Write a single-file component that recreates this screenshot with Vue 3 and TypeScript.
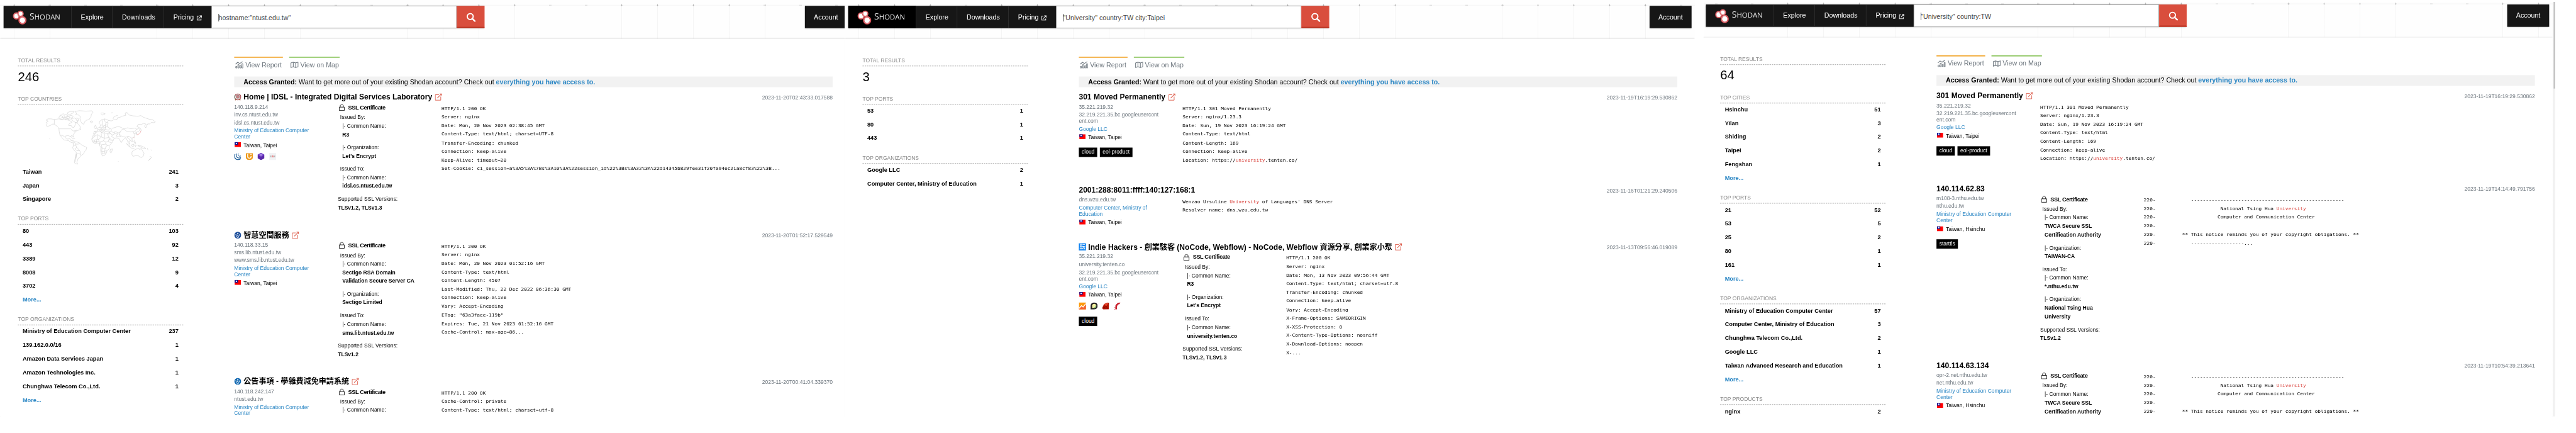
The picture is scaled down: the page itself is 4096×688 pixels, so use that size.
<script setup lang="ts">
interface Cert {
  cn: string[]
  org: string[]
  toCn: string[]
  toOrg?: string[]
  versions: string
  short?: boolean
  clipAfter?: number
}
interface Result {
  icon?: string
  title: string
  link?: boolean
  time: string
  hosts: string[][]
  org: string[]
  place?: string
  tech?: string[]
  tags?: string[]
  cert?: CertLine[]
  banner: string[]
}
interface CertLine {
  text: string
  kind: string
}
interface Facet {
  title: string
  map?: boolean
  rows: [string, string][]
  more?: boolean
}
interface Panel {
  key: string
  query: string
  total: string
  facets: Facet[]
  results: Result[]
}

function certLines(c: Cert): CertLine[] {
  const out: CertLine[] = [{ text: 'Issued By:', kind: 'by' }]
  const block = (label: string, values: string[], gap: boolean) => {
    out.push({ text: '|- ' + label + ':', kind: gap ? 'key gap' : 'key' })
    values.forEach((v) => out.push({ text: v, kind: 'val' }))
  }
  block('Common Name', c.cn, false)
  block('Organization', c.org, true)
  out.push({ text: 'Issued To:', kind: 'by gap' })
  block('Common Name', c.toCn, false)
  if (c.toOrg) block('Organization', c.toOrg, true)
  out.push({ text: 'Supported SSL Versions:', kind: 'sup gap' })
  out.push({ text: c.versions, kind: 'ver' })
  return c.clipAfter ? out.slice(0, c.clipAfter) : out
}

function parts(line: string): { t: string; hit: boolean }[] {
  return line
    .split(/(\[\[.*?\]\])/)
    .filter((s) => s.length > 0)
    .map((s) => (s.startsWith('[[') ? { t: s.slice(2, -2), hit: true } : { t: s, hit: false }))
}

const sp = (n: number) => ' '.repeat(n)
const ftpBanner = [
  '220-' + sp(12) + '-'.repeat(52),
  '220-' + sp(22) + 'National Tsing Hua [[University]]',
  '220-' + sp(21) + 'Computer and Communication Center',
  '220-',
  '220-' + sp(9) + '** This notice reminds you of your copyright obligations. **',
]
const twca: Cert = {
  cn: ['TWCA Secure SSL', 'Certification Authority'],
  org: ['TAIWAN-CA'],
  toCn: ['*.nthu.edu.tw'],
  toOrg: ['National Tsing Hua', 'University'],
  versions: 'TLSv1.2',
}
const moved: Result = {
  title: '301 Moved Permanently',
  link: true,
  time: '2023-11-19T16:19:29.530862',
  hosts: [['35.221.219.32'], ['32.219.221.35.bc.googleusercont', 'ent.com']],
  org: ['Google LLC'],
  place: 'Taiwan, Taipei',
  tags: ['cloud', 'eol-product'],
  banner: [
    'HTTP/1.1 301 Moved Permanently',
    'Server: nginx/1.23.3',
    'Date: Sun, 19 Nov 2023 16:19:24 GMT',
    'Content-Type: text/html',
    'Content-Length: 169',
    'Connection: keep-alive',
    'Location: https://[[university]].tenten.co/',
  ],
}
const moecc = ['Ministry of Education Computer', 'Center']

const panels: Panel[] = [
  {
    key: 'first',
    query: 'hostname:"ntust.edu.tw"',
    total: '246',
    facets: [
      { title: 'TOP COUNTRIES', map: true, rows: [['Taiwan', '241'], ['Japan', '3'], ['Singapore', '2']] },
      { title: 'TOP PORTS', rows: [['80', '103'], ['443', '92'], ['3389', '12'], ['8008', '9'], ['3702', '4']], more: true },
      {
        title: 'TOP ORGANIZATIONS',
        rows: [
          ['Ministry of Education Computer Center', '237'],
          ['139.162.0.0/16', '1'],
          ['Amazon Data Services Japan', '1'],
          ['Amazon Technologies Inc.', '1'],
          ['Chunghwa Telecom Co.,Ltd.', '1'],
        ],
        more: true,
      },
    ],
    results: [
      {
        icon: 'seal',
        title: 'Home | IDSL - Integrated Digital Services Laboratory',
        link: true,
        time: '2023-11-20T02:43:33.017588',
        hosts: [['140.118.9.214'], ['inv.cs.ntust.edu.tw'], ['idsl.cs.ntust.edu.tw']],
        org: moecc,
        place: 'Taiwan, Taipei',
        tech: ['jquery', 'uikit', 'hex', 'sas'],
        cert: certLines({ cn: ['R3'], org: ["Let's Encrypt"], toCn: ['idsl.cs.ntust.edu.tw'], versions: 'TLSv1.2, TLSv1.3' }),
        banner: [
          'HTTP/1.1 200 OK',
          'Server: nginx',
          'Date: Mon, 20 Nov 2023 02:38:45 GMT',
          'Content-Type: text/html; charset=UTF-8',
          'Transfer-Encoding: chunked',
          'Connection: keep-alive',
          'Keep-Alive: timeout=20',
          'Set-Cookie: ci_session=a%3A5%3A%7Bs%3A10%3A%22session_id%22%3Bs%3A32%3A%22d14345b829fee31f20fa94ec21a8cf83%22%3B...',
        ],
      },
      {
        icon: 'ntust',
        title: '智慧空間服務',
        link: true,
        time: '2023-11-20T01:52:17.529549',
        hosts: [['140.118.33.15'], ['sms.lib.ntust.edu.tw'], ['www.sms.lib.ntust.edu.tw']],
        org: moecc,
        place: 'Taiwan, Taipei',
        cert: certLines({
          cn: ['Sectigo RSA Domain', 'Validation Secure Server CA'],
          org: ['Sectigo Limited'],
          toCn: ['sms.lib.ntust.edu.tw'],
          versions: 'TLSv1.2',
        }),
        banner: [
          'HTTP/1.1 200 OK',
          'Server: nginx',
          'Date: Mon, 20 Nov 2023 01:52:16 GMT',
          'Content-Type: text/html',
          'Content-Length: 4507',
          'Last-Modified: Thu, 22 Dec 2022 06:36:30 GMT',
          'Connection: keep-alive',
          'Vary: Accept-Encoding',
          'ETag: "63a3faee-119b"',
          'Expires: Tue, 21 Nov 2023 01:52:16 GMT',
          'Cache-Control: max-age=86...',
        ],
      },
      {
        icon: 'ntust2',
        title: '公告事項 - 學雜費減免申請系統',
        link: true,
        time: '2023-11-20T00:41:04.339370',
        hosts: [['140.118.242.147'], ['ntust.edu.tw']],
        org: moecc,
        cert: certLines({ cn: [], org: [], toCn: [], versions: '', clipAfter: 2 }),
        banner: ['HTTP/1.1 200 OK', 'Cache-Control: private', 'Content-Type: text/html; charset=utf-8'],
      },
    ],
  },
  {
    key: 'second',
    query: '"University" country:TW city:Taipei',
    total: '3',
    facets: [
      { title: 'TOP PORTS', rows: [['53', '1'], ['80', '1'], ['443', '1']] },
      { title: 'TOP ORGANIZATIONS', rows: [['Google LLC', '2'], ['Computer Center, Ministry of Education', '1']] },
    ],
    results: [
      moved,
      {
        title: '2001:288:8011:ffff:140:127:168:1',
        time: '2023-11-16T01:21:29.240506',
        hosts: [['dns.wzu.edu.tw']],
        org: ['Computer Center, Ministry of', 'Education'],
        place: 'Taiwan, Taipei',
        banner: ["Wenzao Ursuline [[University]] of Languages' DNS Server", 'Resolver name: dns.wzu.edu.tw'],
      },
      {
        icon: 'kanji',
        title: 'Indie Hackers - 創業駭客 (NoCode, Webflow) - NoCode, Webflow 資源分享, 創業家小聚',
        link: true,
        time: '2023-11-13T09:56:46.019089',
        hosts: [['35.221.219.32'], ['university.tenten.co'], ['32.219.221.35.bc.googleusercont', 'ent.com']],
        org: ['Google LLC'],
        place: 'Taiwan, Taipei',
        tech: ['ga', 'discourse', 'ruby', 'rails'],
        tags: ['cloud'],
        cert: certLines({ cn: ['R3'], org: ["Let's Encrypt"], toCn: ['university.tenten.co'], versions: 'TLSv1.2, TLSv1.3' }),
        banner: [
          'HTTP/1.1 200 OK',
          'Server: nginx',
          'Date: Mon, 13 Nov 2023 09:56:44 GMT',
          'Content-Type: text/html; charset=utf-8',
          'Transfer-Encoding: chunked',
          'Connection: keep-alive',
          'Vary: Accept-Encoding',
          'X-Frame-Options: SAMEORIGIN',
          'X-XSS-Protection: 0',
          'X-Content-Type-Options: nosniff',
          'X-Download-Options: noopen',
          'X-...',
        ],
      },
    ],
  },
  {
    key: 'third',
    query: '"University" country:TW',
    total: '64',
    facets: [
      { title: 'TOP CITIES', rows: [['Hsinchu', '51'], ['Yilan', '3'], ['Shiding', '2'], ['Taipei', '2'], ['Fengshan', '1']], more: true },
      { title: 'TOP PORTS', rows: [['21', '52'], ['53', '5'], ['25', '2'], ['80', '1'], ['161', '1']], more: true },
      {
        title: 'TOP ORGANIZATIONS',
        rows: [
          ['Ministry of Education Computer Center', '57'],
          ['Computer Center, Ministry of Education', '3'],
          ['Chunghwa Telecom Co.,Ltd.', '2'],
          ['Google LLC', '1'],
          ['Taiwan Advanced Research and Education', '1'],
        ],
        more: true,
      },
      { title: 'TOP PRODUCTS', rows: [['nginx', '2']] },
    ],
    results: [
      moved,
      {
        title: '140.114.62.83',
        time: '2023-11-19T14:14:49.791756',
        hosts: [['m108-3.nthu.edu.tw'], ['nthu.edu.tw']],
        org: moecc,
        place: 'Taiwan, Hsinchu',
        tags: ['starttls'],
        cert: certLines(twca),
        banner: [...ftpBanner, '220-' + sp(12) + '-'.repeat(18) + '...'],
      },
      {
        title: '140.114.63.134',
        time: '2023-11-19T10:54:39.213641',
        hosts: [['opr-2.net.nthu.edu.tw'], ['net.nthu.edu.tw']],
        org: moecc,
        place: 'Taiwan, Hsinchu',
        cert: certLines({ ...twca, clipAfter: 4 }),
        banner: ftpBanner,
      },
    ],
  },
]
</script>

<template>
  <div class="stage">
    <div class="canvas">
      <section v-for="p in panels" :key="p.key" class="panel" :class="p.key">
        <div class="page">
          <header class="top">
            <nav class="bar">
              <div class="brand">
                <svg width="34" height="34" viewBox="27 22 34 34">
                  <g fill="#fff" stroke="#cf4249">
                    <ellipse cx="50.2" cy="45.3" rx="7.6" ry="7.9" stroke-width="3.2" />
                    <ellipse cx="36.7" cy="35.6" rx="6.5" ry="6.9" stroke-width="2.8" />
                    <ellipse cx="46" cy="30.7" rx="5.8" ry="5.9" stroke-width="2.8" />
                  </g>
                  <g fill="none" stroke="#eb9da0" stroke-width=".9">
                    <ellipse cx="50.2" cy="45.3" rx="7.4" ry="7.7" />
                    <ellipse cx="36.7" cy="35.6" rx="6.3" ry="6.7" />
                    <ellipse cx="46" cy="30.7" rx="5.6" ry="5.7" />
                  </g>
                </svg>
                <span class="word"><b>S</b>HODAN</span>
              </div>
              <div class="item explore">Explore</div>
              <div class="item downloads">Downloads</div>
              <div class="item pricing">
                Pricing
                <svg width="12" height="12" viewBox="0 0 12 12" fill="none" stroke="#ddd" stroke-width="1.7">
                  <path d="M4.5 2.2H1V11h8.8V7.5" />
                  <path d="M6.5 1H11v4.5M10.6 1.4 4.4 7.6" />
                </svg>
              </div>
              <div class="search"><i class="caret"></i>{{ p.query }}</div>
              <div class="go">
                <svg width="22" height="20" viewBox="0 0 22 20" fill="none" stroke="#fff">
                  <circle cx="9.2" cy="8" r="6.6" stroke-width="2.8" />
                  <path d="M13.6 12.4 19.6 18.3" stroke-width="3.4" stroke-linecap="round" />
                </svg>
              </div>
            </nav>
            <div class="account">Account</div>
          </header>

          <main class="main">
            <aside class="side">
              <h6>TOTAL RESULTS</h6>
              <div class="total">{{ p.total }}</div>
              <div v-for="f in p.facets" :key="f.title" class="facet">
                <h6>{{ f.title }}</h6>
                <div v-if="f.map" class="mapbox">
                  <svg class="map" viewBox="250 700 640 376" preserveAspectRatio="none" fill="none" stroke="#c4c4c4" stroke-width="2">
                    <path d="M304 768 285 764 268 764 258 772 270 780 258 788 264 798 258 806 264 816 282 808 296 798 306 802 318 812 326 822 330 834 332 852 336 874 344 884 350 896 360 906 372 908 386 912 398 922 410 926M412 916 400 908 392 898 376 900 364 888 366 880 380 876 394 882 402 876 412 888 408 872 420 858 418 850 436 842 454 834 446 828 452 822 442 804 434 794 424 788 420 808 414 822 404 820 400 810 384 808 388 796 404 786 390 776 370 768 350 770 330 764 304 768V800" />
                    <path d="M330 831H396L402 838 412 846 430 840M336 874 352 876 364 888M396 912 404 906 414 910M395 880 405 895 420 898" />
                    <path d="M420 714 445 709 480 712 515 710 522 718 512 734 510 750 504 760 500 768 484 774 474 784 470 800 460 796 454 784 448 762 450 748 440 738 424 736 430 726Z" />
                    <path d="M332 748 342 742 352 748 346 756 360 760 350 768 336 764 330 756ZM358 738 370 734 380 740 376 752 364 752ZM380 720 396 714 416 714 410 724 396 732 386 738 378 730ZM385 745 402 740 410 748 404 758 390 756ZM400 762 418 758 432 770 436 786 424 790 412 780 404 774ZM362 756 378 758 386 770 366 770ZM348 732 358 730M334 742 346 736M424 764 430 758 440 764 438 778 428 776M370 744 388 750M340 760 356 752 374 762 396 766" />
                    <path d="M504 782 514 778 521 784 512 790ZM564 726 576 724 590 730 578 738 566 736M624 724 632 722M276 896 280 900" />
                    <path d="M410 926 416 918 428 918 446 926 456 938 468 946 486 956 482 974 474 984 468 1000 454 1010 448 1022 438 1030 434 1044 430 1056 436 1068 422 1066 416 1056 420 1034 424 1010 428 992 416 976 406 958 412 944Z" />
                    <path d="M416 918 424 934 438 934 448 928M412 944 424 940 430 956 420 966 430 978 446 978 454 994 446 1000 430 998 426 1030M446 978 438 966 430 956M446 1000 456 1008M428 1002 424 1030 420 1056M424 934 426 942" />
                    <path d="M524 870 536 856 550 850 566 850 572 858 600 862 606 876 614 892 624 906 636 908 628 924 612 944 612 966 600 978 596 994 586 1010 574 1014 568 996 564 976 566 956 558 944 558 930 544 926 530 930 518 918 514 900Z" />
                    <path d="M536 856 526 884 516 900M526 884 546 870 568 886V862M568 886 552 902 530 906 516 908M552 902 556 916 558 930M568 886 586 894V864M586 894 608 890M586 894 580 912 562 918M580 912 594 920 606 918 612 900M562 918 560 940M594 920 592 934 568 938M592 934 604 942 612 944M568 938 572 960 590 964 594 950 604 942M566 958 572 960 570 982 584 984 590 964M584 984 588 996 596 990M570 982 574 1000 586 996M530 906 534 930M540 904 542 926M518 918 534 916 556 916M606 918 626 924M584 984 600 974M546 870 548 900" />
                    <path d="M618 970 630 966 628 980 622 994 617 984ZM524 866 528 848 546 846 552 836 542 830 556 822 564 812 560 804 572 806 578 812 590 808 600 804 608 792 598 786 592 796 590 808M528 824 534 806 542 822 536 832ZM556 798 558 782 570 770 586 764 598 768 608 774 600 788M570 770 576 786 572 806M586 764 588 782 596 790" />
                    <path d="M552 836 562 844 570 858 576 852 566 840 574 838 586 856 590 848 606 846 614 856 600 862M556 822 568 824 578 818 590 822 600 816 614 826 610 840 592 836 580 840 568 832 556 836M578 812V840M590 808 592 836M600 804 606 818M568 824 566 840M528 848 540 850M582 824 588 846" />
                    <path d="M608 774 624 778 638 770 656 768 660 756 672 754 684 746 706 740 702 728 712 722 724 738 746 744 774 746 790 742 806 754 836 766 856 770 872 784 864 790 850 788 838 798 828 798 818 824 810 812 820 800 806 794 792 802 776 800 768 816 780 822 790 832 792 846M634 764 640 748 660 740M704 722 718 726" />
                    <path d="M614 826 626 836 622 848 636 856 648 850 664 858 676 850 682 838 694 832 680 822 662 814 646 822 626 828M694 832 716 824 734 830 756 826 768 834 756 846 734 852 712 850 694 832M768 834 778 828 786 838 778 848 764 854 768 868 754 862 746 852M676 850 668 866 684 882 706 888 720 880 740 894 754 884 756 868 746 858" />
                    <path d="M606 866 620 864 630 872 626 884 642 894 632 908 616 906 608 886M630 872 644 864 660 866 652 880 664 884 676 884 668 866M642 894 656 892 668 898 680 924 690 904 704 892 712 904 718 922 728 936 722 916 732 910 742 918 740 894M620 864 612 850 622 848M644 864 640 852M660 866 664 858M712 894 720 880M732 910 726 900 718 896" />
                    <path d="M708 930 722 940 732 956 724 950ZM736 940 750 934 752 946 742 950ZM734 960 754 962M756 940 764 940 758 954M752 904 758 918 762 930 754 926 750 912M772 944 792 946 814 958 818 966 798 960 786 952ZM760 850 766 866M752 888V892" />
                    <path d="M740 986 746 978 760 970 770 964 780 964 784 972 792 962 800 980 808 996 804 1014 794 1024 784 1020 774 1010 760 1012 746 1016 740 1004ZM840 1016 850 1022 842 1034 832 1044 846 1030M846 972 852 976M830 974 826 960M662 1050H665" />
                    <path stroke="#e0787b" d="M767 872 778 866 786 858 790 844M751 889 752 893" />
                  </svg>
                </div>
                <div class="rows">
                  <div v-for="r in f.rows" :key="r[0]" class="row"><span>{{ r[0] }}</span><span>{{ r[1] }}</span></div>
                  <div v-if="f.more" class="row more">More...</div>
                </div>
              </div>
            </aside>

            <section class="results">
              <div class="tabs">
                <div class="tab report">
                  <svg width="19" height="16" viewBox="0 0 19 16" fill="none" stroke="#6c757d" stroke-width="1.5">
                    <path d="M1.2 6.5 6 2.3 10.5 5 16.8.8" />
                    <path d="M1.5 15.2V11.5H4v3.7ZM6.2 15.2V7.5H8.8v7.7ZM11 15.2V10h2.2v5.2ZM15.2 15.2V5.5h2.2v9.7Z" stroke-width="1.3" />
                  </svg>
                  <span>View Report</span>
                </div>
                <div class="tab onmap">
                  <svg width="18" height="14" viewBox="0 0 18 14" fill="none" stroke="#6c757d" stroke-width="1.5" stroke-linejoin="round">
                    <path d="M1 2.8 6.2 1l5.4 1.8L17 1v10.2L11.600 13 6.200 11.200 1 13ZM6.200 1v10.200M11.600 2.800V13" />
                  </svg>
                  <span>View on Map</span>
                </div>
              </div>
              <div class="notice">
                <b>Access Granted:</b> Want to get more out of your existing Shodan account? Check out
                <b class="link">everything you have access to.</b>
              </div>

              <article v-for="r in p.results" :key="r.title" class="result">
                <div class="head">
                  <svg v-if="r.icon === 'seal'" class="fav" viewBox="0 0 16 16">
                    <circle cx="8" cy="7.600" r="6.800" fill="#f3eeee" stroke="#a9474b" stroke-width="1.600" />
                    <path d="M2 3.500A7.200 7.200 0 0 0 3 13" fill="none" stroke="#4c8a6a" stroke-width="1.400" />
                    <circle cx="8" cy="7" r="4" fill="#c98488" stroke="#777" stroke-width=".8" />
                    <path d="M2 15l3-3M14 15l-3-3" stroke="#a6624a" stroke-width="1.800" />
                  </svg>
                  <svg v-else-if="r.icon === 'ntust' || r.icon === 'ntust2'" class="fav" viewBox="0 0 16 16">
                    <circle cx="8" cy="7.800" r="7.600" :fill="r.icon === 'ntust' ? '#1d4f9c' : '#1268b1'" />
                    <path d="M8 2.200 9.700 4.400 8 6.300 6.300 4.400Z" fill="#fff" />
                    <path d="M3.600 5.500C3.800 9 6.500 9.600 7.200 14M12.400 5.500C12.200 9 9.500 9.600 8.800 14" fill="none" stroke="#fff" stroke-width="1.200" />
                    <circle cx="8" cy="8" r="1.200" fill="#fff" />
                  </svg>
                  <span v-else-if="r.icon === 'kanji'" class="fav kanji">転</span>
                  <h2>{{ r.title }}</h2>
                  <svg v-if="r.link" class="ext" viewBox="0 0 16 16" fill="none" stroke="#dc5a49" stroke-width="1.300">
                    <path d="M9 2.800H1V15h12.200V7" />
                    <path d="M10.500.8h4.600v4.600M14.700 1.200 5.500 10.300" stroke-width="1.500" />
                  </svg>
                  <time>{{ r.time }}</time>
                </div>
                <div class="body">
                  <div class="hosts">
                    <div v-for="h in r.hosts" :key="h[0]" class="host"><div v-for="l in h" :key="l">{{ l }}</div></div>
                    <div class="host org"><div v-for="l in r.org" :key="l">{{ l }}</div></div>
                    <div v-if="r.place" class="host place">
                      <svg width="14" height="11" viewBox="0 0 14 11">
                        <path fill="#f00" d="M0 0h14v11H0z" />
                        <path fill="#0a1596" d="M0 0h7.600v6H0z" />
                        <circle cx="4" cy="3" r="1.600" fill="#fff" />
                      </svg>
                      {{ r.place }}
                    </div>
                    <div v-if="r.tech" class="tech">
                      <svg v-for="t in r.tech" :key="t" width="16" height="16" viewBox="0 0 16 16">
                        <g v-if="t === 'jquery'" fill="none" stroke="#21609b">
                          <path d="M2 2.500C-1 8 1.500 14.500 8 15.200c3 .2 5-.8 7-3" stroke-width="1.900" />
                          <path d="M5.500 1.500C3.500 5.500 5 10 9.500 11.200c2.300.5 4.300-.2 5.700-1.600" stroke-width="1.700" />
                          <path d="M9.200 1C8 3.500 9 6.500 11.500 7.200c1.500.4 2.700 0 3.500-.7" stroke-width="1.400" />
                        </g>
                        <g v-else-if="t === 'uikit'">
                          <path d="M0 .5h16V11.500L11.500 15.800H4.500L0 11.500Z" fill="#ee9a1c" />
                          <path d="M5.200 3.500H4.200v5c0 2 1.300 3.200 3.800 3.200s3.800-1.200 3.800-3.200V6.500M10.300 3.300H12.800" fill="none" stroke="#fff" stroke-width="1.900" />
                        </g>
                        <g v-else-if="t === 'hex'">
                          <path d="M8 0 15.500 4V12L8 16 .5 12V4Z" fill="#5b2aa8" />
                          <path d="M8 0 15.500 4 8 9 .5 4Z" fill="#7a4bd0" />
                          <path d="M5.500 4.500 8 3l2.500 1.500L8 6.500Z" fill="none" stroke="#d9c8f5" stroke-width=".9" />
                        </g>
                        <g v-else-if="t === 'sas'">
                          <path fill="#f2f3f5" d="M0 0h16v16H0z" />
                          <text x="8" y="10.300" text-anchor="middle" font-size="6" font-weight="700" font-style="italic" fill="#9a9a9a">S<tspan fill="#e04040">A</tspan>S</text>
                        </g>
                        <g v-else-if="t === 'ga'">
                          <path fill="#fc9a0d" d="M0 0h16v16H0z" />
                          <path fill="#f4622d" d="M0 14 5.500 8 9 11 16 3v13H0z" />
                          <path d="M.5 13.500 5.800 7.500 9.500 10.500 15.500 3" fill="none" stroke="#fff" stroke-width="1.900" />
                        </g>
                        <g v-else-if="t === 'discourse'">
                          <path d="M8.200 0A7.800 7.800 0 0 0 .3 8v8H8.200a8 8 0 0 0 0-16Z" fill="#231f20" />
                          <path d="M8.300 3.200A4.800 4.800 0 0 0 4 10.300L3.300 13l3-.7A4.800 4.800 0 1 0 8.300 3.200Z" fill="#f6f0a0" />
                          <path d="M12 5a4.800 4.800 0 0 1-5.700 7.300L3.300 13A8 8 0 0 0 12 5Z" fill="#6fc07a" />
                        </g>
                        <g v-else-if="t === 'ruby'">
                          <path d="M1 11 4 4.500 11 .5 15.500 1 15 15.500 3 16 .5 14Z" fill="#b11401" />
                          <path d="M4 4.500 11 .5 14 2 9.500 8.500Z" fill="#e0442e" />
                          <path d="M1 11 5 12 9.500 8.500 12 15" fill="none" stroke="#7e0c03" stroke-width="1" />
                        </g>
                        <g v-else fill="none" stroke="#c8202c">
                          <path d="M5.500 16C4.500 9 7 3 13.500 2" stroke-width="3.600" />
                          <path d="M1 15.500H3M1.800 11.500l1.800.5M3 7.500l1.600.9M5.500 3.800l1.200 1.300M9.500.8l.5 1.500M14 .2v1.400" stroke-width="1.200" />
                        </g>
                      </svg>
                    </div>
                    <div v-if="r.tags" class="tags"><span v-for="t in r.tags" :key="t">{{ t }}</span></div>
                  </div>
                  <div v-if="r.cert" class="cert">
                    <div class="certhead">
                      <svg width="14" height="15" viewBox="0 0 14 15" fill="none" stroke="#111" stroke-width="1.300">
                        <path d="M1 6.500h11.600v7.700H1ZM3.300 6.500V4.200C3.300 2 4.800.8 6.800.8s3.500 1.200 3.500 3.400v2.300" />
                      </svg>
                      <b>SSL Certificate</b>
                    </div>
                    <div v-for="(l, i) in r.cert" :key="i" :class="l.kind">{{ l.text }}</div>
                  </div>
                  <pre class="raw"><div v-for="(l, i) in r.banner" :key="i"><span v-for="(s, j) in parts(l)" :key="j" :class="{ hit: s.hit }">{{ s.t }}</span></div></pre>
                </div>
              </article>
            </section>
          </main>
        </div>
        <div v-if="p.key === 'third'" class="scroll"><i></i></div>
      </section>
    </div>
  </div>
</template>

<style>
body {
  background: #fff;
  overflow: hidden;
}
</style>

<style scoped>
.stage {
  width: 4096px;
  height: 688px;
  overflow: hidden;
}
.canvas {
  display: flex;
  width: 5764px;
  height: 968px;
  transform: scale(0.71062);
  transform-origin: 0 0;
  font-family: 'Liberation Sans', 'Noto Sans CJK TC', Arial, sans-serif;
  color: #000;
}
.panel {
  flex: none;
  height: 931px;
  overflow: hidden;
}
.first {
  width: 1890px;
}
.second {
  width: 1903px;
}
.third {
  display: flex;
  width: 1905px;
  height: 927px;
  margin: 4px 0 0 19px;
}
.page {
  flex: none;
  width: 1903px;
  height: 931px;
}
.third .page {
  margin: -7px 0 0 -3px;
  height: 938px;
}
.scroll {
  flex: none;
  width: 5px;
  height: 927px;
  background: #f1f1f1;
}
.scroll i {
  display: block;
  width: 3px;
  height: 194px;
  margin-left: 2px;
  background: #bfbfbf;
}
.top {
  display: flex;
  justify-content: space-between;
  align-items: flex-start;
  box-sizing: border-box;
  height: 87px;
  padding: 13px 8px 0;
  background-color: #fefefe;
  background-image:
    linear-gradient(#d4d4d4, #d4d4d4),
    linear-gradient(#d4d4d4, #d4d4d4),
    linear-gradient(#f4f4f4, #f4f4f4),
    linear-gradient(#f4f4f4, #f4f4f4);
  background-size: 80px 1px, 80px 5px, 100% 1px, 80px 100%;
  background-position: 0 11px, 0 9px, 0 11px, 0 0;
  background-repeat: no-repeat;
  background-image:
    repeating-linear-gradient(90deg, transparent 0 31px, #f6f6f6 31px 32px, transparent 32px 80px),
    linear-gradient(#f2f2f2, #f2f2f2),
    repeating-linear-gradient(90deg, transparent 0 31px, #ccc 31px 32px, transparent 32px 80px),
    repeating-linear-gradient(90deg, transparent 0 29px, #ccc 29px 34px, transparent 34px 80px);
  background-size: 100% 100%, 100% 1px, 100% 5px, 100% 1px;
  background-position: 0 14px, 0 11px, 0 9px, 0 11px;
  background-blend-mode: multiply;
}
.bar {
  display: flex;
  height: 50px;
  background: #161616;
  box-shadow: 0 2px 3px rgba(0, 0, 0, 0.3);
}
.brand {
  display: flex;
  box-sizing: border-box;
  width: 152px;
  padding: 9px 0 0 19px;
  border-right: 1px solid #333;
}
.second .brand {
  background: #000;
}
.word {
  margin: -3px 0 0 5px;
  font: 16px/34px 'Open Sans', 'Noto Sans', sans-serif;
  color: #e2e2e2;
}
.word b {
  font-weight: 400;
  font-size: 20px;
}
.item,
.account {
  box-sizing: border-box;
  padding-left: 21px;
  border-right: 1px solid #333;
  font-size: 15px;
  line-height: 50px;
  color: #fff;
  white-space: nowrap;
}
.explore {
  width: 92px;
}
.downloads {
  width: 115px;
}
.pricing {
  display: flex;
  align-items: center;
  gap: 6px;
  width: 106px;
  border: 0;
}
.pricing svg {
  margin-top: 3px;
}
.search {
  display: flex;
  align-items: center;
  box-sizing: border-box;
  width: 549px;
  padding-left: 15px;
  border: 1px solid #888;
  background: #fff;
  font-size: 15px;
  color: #444;
  padding-top: 2px;
}
.caret {
  width: 1px;
  height: 17px;
  margin-right: -1px;
  background: #000;
}
.go {
  box-sizing: border-box;
  width: 62px;
  padding: 15px 0 0 20px;
  border: 1px solid #e2604f;
  border-bottom: 3px solid #bb3524;
  background: #d94e3d;
}
.account {
  width: 94px;
  border: 0;
  background: #161616;
  padding-left: 20px;
  box-shadow: 0 2px 3px rgba(0, 0, 0, 0.3);
}
.main {
  display: flex;
  height: 851px;
  padding-left: 40px;
  background: #fff;
  box-shadow: 0 -1px 3px rgba(0, 0, 0, 0.14);
}
.side {
  flex: none;
  width: 370px;
  margin-right: 114px;
  padding-top: 36.5px;
}
h6 {
  margin: 0;
  border-bottom: 1px dashed #888;
  font-weight: 400;
  font-size: 12px;
  line-height: 23px;
  color: #888;
}
.total {
  height: 62px;
  font-size: 28.5px;
  line-height: 47px;
}
.facet {
  margin-bottom: 17px;
}
.mapbox {
  height: 136px;
}
.map {
  display: block;
  width: 255px;
  height: 125px;
  margin-left: 60px;
  padding-top: 10.5px;
}
.rows {
  margin-top: -0.8px;
}
.row {
  display: flex;
  justify-content: space-between;
  padding: 0 10.5px;
  font-weight: 700;
  font-size: 13px;
  line-height: 30.8px;
}
.more {
  color: #2a86c4;
}
.results {
  flex: none;
  width: 1339px;
  padding-top: 40px;
}
.tabs {
  display: flex;
  gap: 14px;
  height: 44px;
}
.tab {
  display: flex;
  align-items: center;
  box-sizing: border-box;
  height: 33px;
  border-top: 2px solid #f09609;
  font-size: 15px;
  line-height: 30px;
  color: #6c757d;
  white-space: nowrap;
}
.report {
  width: 109px;
  padding-left: 2px;
  gap: 4px;
}
.onmap {
  width: 113px;
  border-color: #77bb41;
  padding-left: 3px;
  gap: 4px;
}
.notice {
  height: 24px;
  padding-left: 21px;
  background: #f2f2f2;
  font-size: 15px;
  line-height: 24px;
}
.link {
  color: #2a86c4;
}
.result {
  padding-bottom: 25.2px;
}
.head {
  display: flex;
  align-items: center;
  height: 20px;
  margin: 13.3px 0 2.5px;
}
.fav {
  flex: none;
  width: 16px;
  height: 16px;
  margin: -2px 5px 0 0;
}
.kanji {
  background: #1183f0;
  color: #fff;
  font-size: 13px;
  line-height: 15px;
  text-align: center;
}
h2 {
  margin: 0;
  font-weight: 700;
  font-size: 17px;
  line-height: 20px;
  white-space: nowrap;
}
.ext {
  width: 16px;
  height: 16px;
  margin: -2px 0 0 6px;
}
time {
  margin-left: auto;
  font-size: 12px;
  color: #6c757d;
}
.body {
  display: flex;
  align-items: flex-start;
  font-size: 12px;
}
.hosts {
  flex: none;
  width: 232px;
  padding-top: 1px;
}
.host {
  margin-bottom: 3.6px;
  line-height: 14px;
  color: #6c757d;
  white-space: nowrap;
}
.org {
  color: #2a86c4;
}
.place {
  display: flex;
  align-items: center;
  gap: 6px;
  margin: 5px 0 0 1px;
  color: #000;
}
.place svg {
  margin-top: -2px;
}
.tech {
  display: flex;
  gap: 10px;
  margin-top: 10px;
}
.tags {
  display: flex;
  gap: 5.5px;
  margin-top: 16px;
}
.tags span {
  padding: 0 6.4px;
  background: #000;
  color: #fff;
  font-size: 12px;
  line-height: 21px;
}
.cert {
  flex: none;
  width: 232px;
  padding-bottom: 3.6px;
  line-height: 19.2px;
}
.certhead {
  display: flex;
  align-items: center;
  gap: 7px;
  height: 19.2px;
  margin-bottom: 3.2px;
  padding-left: 2px;
  font-size: 13px;
}
.certhead b {
  letter-spacing: -0.6px;
}
.by {
  padding-left: 5px;
}
.key,
.val {
  padding-left: 10px;
}
.val,
.ver {
  font-weight: 700;
}
.gap {
  margin-top: 9.8px;
}
.raw {
  margin: 0;
  padding: 2px 0 10.8px;
  font: 10.96px/19.2px 'DejaVu Sans Mono', 'Liberation Mono', monospace;
}
.raw div {
  height: 19.2px;
}
.hit {
  color: #d9403a;
}
</style>
